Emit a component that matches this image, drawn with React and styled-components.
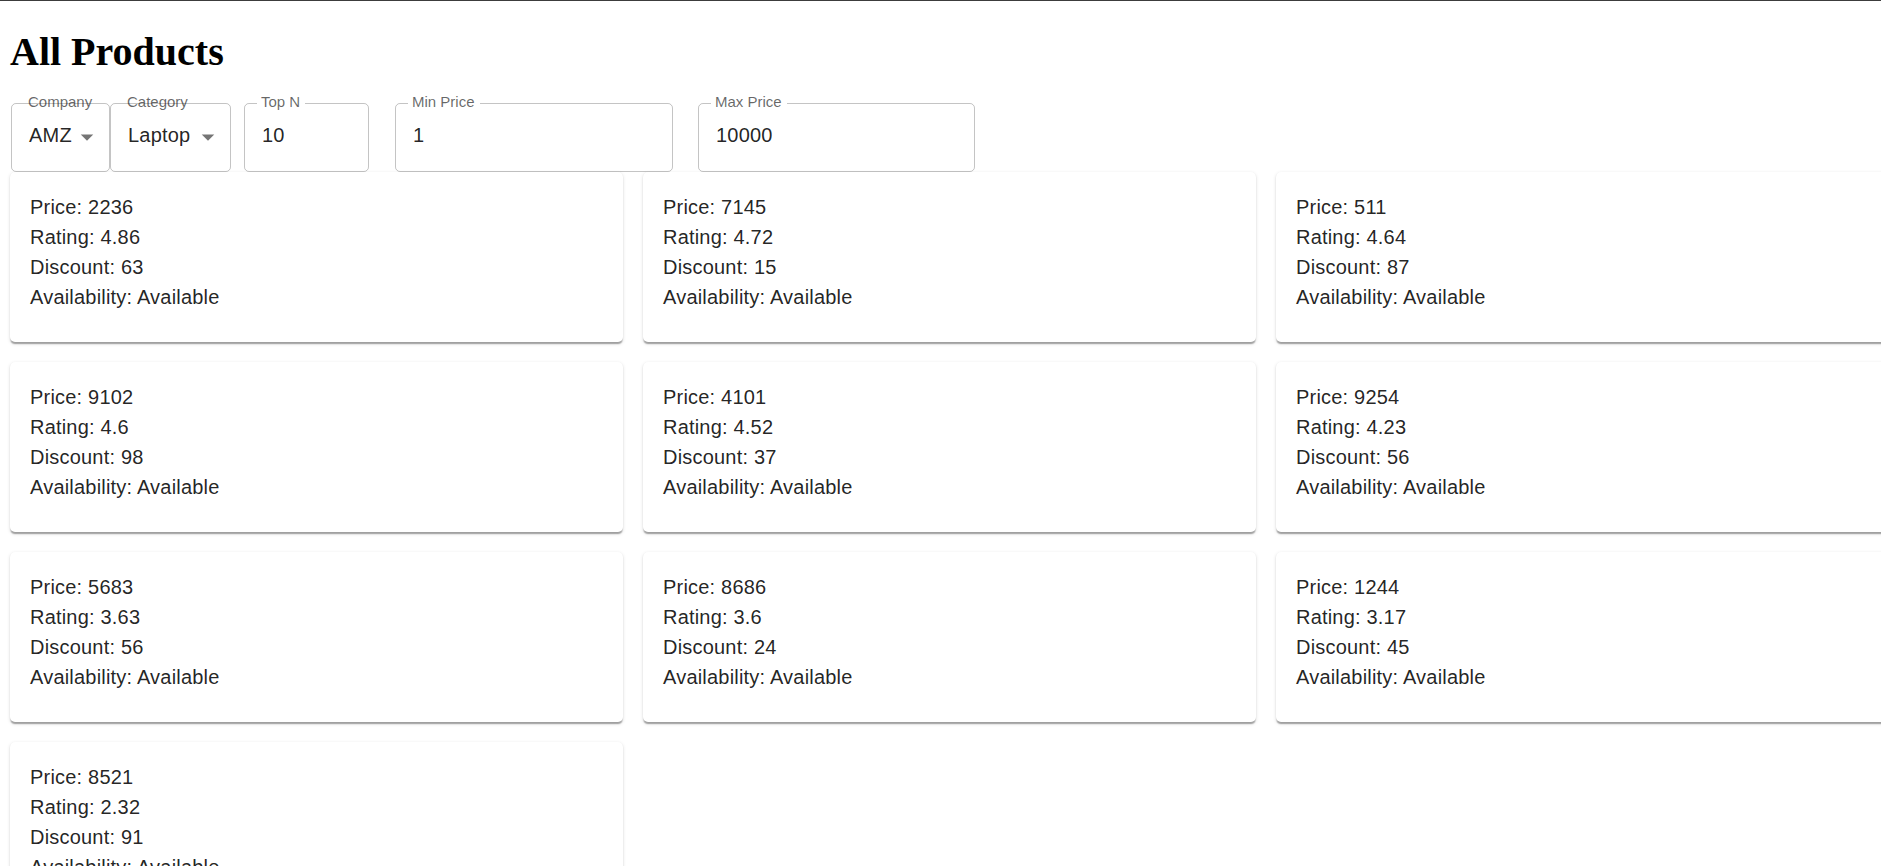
import styled, { createGlobalStyle } from "styled-components";

const GlobalStyle = createGlobalStyle`
  html {
    border-top: 1px solid #3c3c3c;
    scrollbar-width: none;
  }
  html::-webkit-scrollbar,
  body::-webkit-scrollbar {
    display: none;
  }
  body {
    margin: 0;
    overflow-x: hidden;
    background: #fff;
    font-family: "Liberation Sans", Arial, sans-serif;
  }
`;

const filters = [
  { label: "Company", value: "AMZ", select: true, width: 99, offset: 1 },
  { label: "Category", value: "Laptop", select: true, width: 121, offset: 0 },
  { label: "Top N", value: "10", width: 125, offset: 13 },
  { label: "Min Price", value: "1", width: 278, offset: 26 },
  { label: "Max Price", value: "10000", width: 277, offset: 25 },
];

const products = [
  { price: 2236, rating: 4.86, discount: 63 },
  { price: 7145, rating: 4.72, discount: 15 },
  { price: 511, rating: 4.64, discount: 87 },
  { price: 9102, rating: 4.6, discount: 98 },
  { price: 4101, rating: 4.52, discount: 37 },
  { price: 9254, rating: 4.23, discount: 56 },
  { price: 5683, rating: 3.63, discount: 56 },
  { price: 8686, rating: 3.6, discount: 24 },
  { price: 1244, rating: 3.17, discount: 45 },
  { price: 8521, rating: 2.32, discount: 91 },
];

export default function App() {
  return (
    <>
      <GlobalStyle />
      <Page>
        <Title>All Products</Title>
        <FilterRow>
          {filters.map((f) => (
            <Field key={f.label} $width={f.width} $offset={f.offset}>
              <Label $notched={!f.select}>{f.label}</Label>
              {f.select ? (
                <>
                  <Value>{f.value}</Value>
                  <Arrow viewBox="0 0 24 24">
                    <path d="M7 10l5 5 5-5z" />
                  </Arrow>
                </>
              ) : (
                <Input type="text" defaultValue={f.value} />
              )}
            </Field>
          ))}
        </FilterRow>
        <Grid>
          {products.map((p, i) => (
            <Card key={i}>
              <Line>Price: {p.price}</Line>
              <Line>Rating: {p.rating}</Line>
              <Line>Discount: {p.discount}</Line>
              <Line>Availability: Available</Line>
            </Card>
          ))}
        </Grid>
      </Page>
    </>
  );
}

const Page = styled.div`
  padding: 0 10px;
`;

const Title = styled.h1`
  margin: 27.5px 0 28.5px;
  font-family: "Liberation Serif", "Times New Roman", serif;
  font-size: 40px;
  font-weight: 700;
  line-height: 46px;
  color: #000;
`;

const FilterRow = styled.div`
  display: flex;
  align-items: flex-start;
`;

const Field = styled.div`
  position: relative;
  box-sizing: border-box;
  width: ${(props) => props.$width}px;
  height: 69px;
  margin-left: ${(props) => props.$offset}px;
  padding: 17px 40px 0 17px;
  border: 1px solid rgba(0, 0, 0, 0.23);
  border-radius: 5px;
`;

const Label = styled.span`
  position: absolute;
  top: -10px;
  left: ${(props) => (props.$notched ? "12px" : "16px")};
  padding: ${(props) => (props.$notched ? "0 5px 0 4px" : "0")};
  background: ${(props) => (props.$notched ? "#fff" : "transparent")};
  font-size: 15px;
  line-height: 15px;
  color: rgba(0, 0, 0, 0.6);
  white-space: nowrap;
`;

const Value = styled.div`
  font-size: 20px;
  line-height: 29px;
  letter-spacing: 0.2px;
  color: rgba(0, 0, 0, 0.87);
  white-space: nowrap;
`;

const Input = styled.input`
  display: block;
  width: 100%;
  padding: 0;
  margin: 0;
  border: none;
  outline: none;
  background: transparent;
  font-family: inherit;
  font-size: 20px;
  line-height: 29px;
  letter-spacing: 0.2px;
  height: 29px;
  color: rgba(0, 0, 0, 0.87);
`;

const Arrow = styled.svg`
  position: absolute;
  top: 18px;
  right: 7px;
  width: 30px;
  height: 30px;
  fill: rgba(0, 0, 0, 0.54);
`;

const Grid = styled.div`
  display: grid;
  grid-template-columns: repeat(3, 613px);
  gap: 20px;
`;

const Card = styled.div`
  box-sizing: border-box;
  height: 170px;
  padding: 20px 20px 30px;
  background: #fff;
  border-radius: 5px;
  box-shadow: 0 2.5px 1.25px -1.25px rgba(0, 0, 0, 0.2),
    0 1.25px 1.25px 0 rgba(0, 0, 0, 0.14),
    0 1.25px 3.75px 0 rgba(0, 0, 0, 0.12);
`;

const Line = styled.div`
  font-size: 20px;
  line-height: 30px;
  letter-spacing: 0.2px;
  color: rgba(0, 0, 0, 0.87);
`;
